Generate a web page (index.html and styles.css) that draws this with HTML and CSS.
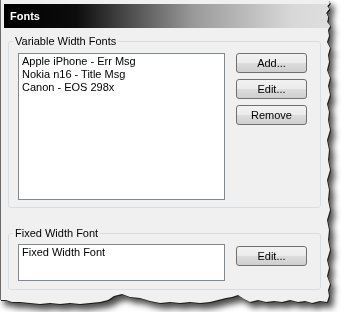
FILE: index.html
```html
<!DOCTYPE html>
<html lang="en">
<head>
  <meta charset="UTF-8">
  <title>Fonts</title>
  <link rel="stylesheet" href="styles.css">
</head>
<body>
  <div class="shadow">
    <div class="sheet">
      <div class="titlebar">Fonts</div>

      <fieldset class="group group-variable">
        <legend>Variable Width Fonts</legend>
        <div class="row">
          <div class="listbox">
            <div>Apple iPhone - Err Msg</div>
            <div>Nokia n16 - Title Msg</div>
            <div>Canon - EOS 298x</div>
          </div>
          <div class="buttons">
            <button>Add...</button>
            <button>Edit...</button>
            <button>Remove</button>
          </div>
        </div>
      </fieldset>

      <fieldset class="group group-fixed">
        <legend>Fixed Width Font</legend>
        <div class="row">
          <div class="textbox">Fixed Width Font</div>
          <div class="buttons">
            <button>Edit...</button>
          </div>
        </div>
      </fieldset>
    </div>
  </div>
</body>
</html>
```

FILE: styles.css
```css
body {
  margin: 0;
  background-color: #ffffff;
  font-family: "Liberation Sans", Arial, sans-serif;
  font-size: 11px;
  line-height: 13px;
  color: #000000;
}

.shadow {
  width: 338px;
  height: 312px;
  filter: drop-shadow(1px 1px 0 #1e1e1e) drop-shadow(4px 5px 3px rgba(0, 0, 0, 0.7));
}

.sheet {
  width: 331px;
  height: 306px;
  box-sizing: border-box;
  background-color: #f0f0f0;
  border-left: 1px solid #6a6a6a;
  padding-top: 4px;
  clip-path: polygon(
    0 0, 328px 0, 330px 3px, 327px 6px, 329px 9px, 326px 13px, 328px 17px, 327px 22px,
    330px 26px, 328px 30px, 329px 36px, 327px 42px, 330px 48px, 328px 55px, 329px 62px,
    327px 70px, 330px 78px, 328px 86px, 330px 95px, 327px 104px, 329px 112px, 328px 120px,
    330px 130px, 327px 140px, 329px 150px, 328px 160px, 330px 170px, 327px 180px,
    329px 190px, 328px 200px, 330px 210px, 327px 220px, 329px 230px, 328px 240px,
    330px 250px, 327px 260px, 329px 268px, 327px 276px, 330px 284px, 328px 290px,
    329px 296px, 327px 302px,
    320px 301px, 312px 303px, 305px 301px, 298px 302px, 290px 300px, 282px 302px,
    274px 301px, 266px 302px, 258px 300px, 250px 302px, 244px 299px, 238px 295px,
    232px 297px, 226px 298px, 218px 300px, 210px 302px, 200px 303px, 190px 302px,
    180px 303px, 170px 302px, 160px 303px, 150px 301px, 140px 298px, 130px 297px,
    122px 294px, 114px 296px, 108px 300px, 100px 302px, 90px 303px, 80px 304px,
    70px 303px, 60px 304px, 50px 303px, 40px 304px, 30px 303px, 20px 302px,
    12px 302px, 6px 300px, 0 300px
  );
}

.titlebar {
  margin-left: 3px;
  height: 24px;
  padding-left: 6px;
  display: flex;
  align-items: center;
  font-weight: bold;
  color: #ffffff;
  background: linear-gradient(90deg, #000000 0%, #0c0c0c 22%, #9a9a9a 58%, #d8d8d8 88%, #dedede 100%);
}

.group {
  margin: 7px 0 0 7px;
  width: 313px;
  box-sizing: border-box;
  border: 1px solid #d5dfe5;
  border-radius: 3px;
  padding: 5px 12px 7px 9px;
  min-width: 0;
}

.group legend {
  padding: 0 2px;
  margin-left: -5px;
  color: #000000;
}

.group-fixed {
  margin-top: 19px;
  padding-top: 4px;
  padding-bottom: 8px;
}

.row {
  display: flex;
  gap: 11px;
  align-items: flex-start;
}

.listbox,
.textbox {
  width: 207px;
  box-sizing: border-box;
  background-color: #ffffff;
  border: 1px solid #828790;
  padding: 1px 3px;
}

.listbox {
  height: 147px;
}

.textbox {
  height: 37px;
}

.buttons {
  display: flex;
  flex-direction: column;
  gap: 6px;
}

.group-fixed .buttons {
  margin-top: 2px;
}

button {
  width: 71px;
  height: 20px;
  box-sizing: border-box;
  border: 1px solid #707070;
  border-radius: 3px;
  background: linear-gradient(#f2f2f2 0%, #ebebeb 50%, #dddddd 50%, #cfcfcf 100%);
  font-family: inherit;
  font-size: 11px;
  color: #000000;
  padding: 0;
}
```
